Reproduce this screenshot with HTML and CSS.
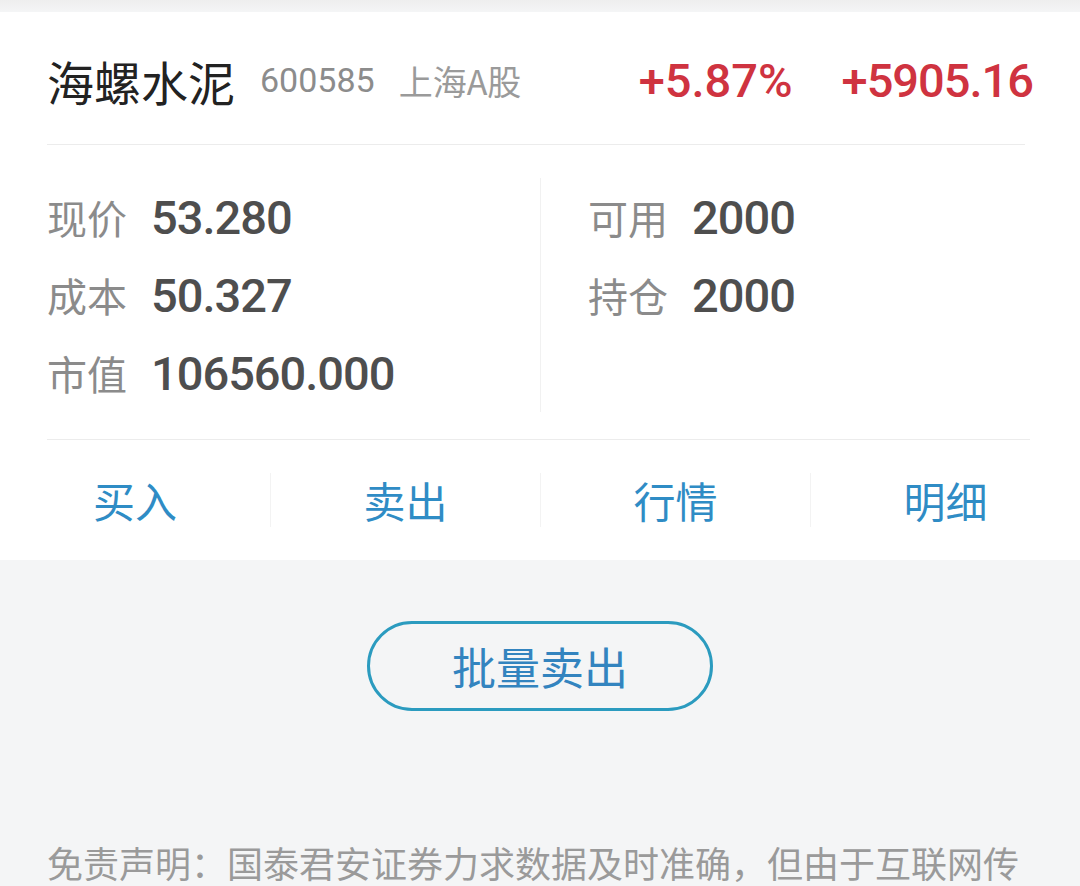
FILE: index.html
```html
<!DOCTYPE html>
<html lang="zh-CN">
<head>
<meta charset="utf-8">
<title>持仓详情</title>
<link rel="stylesheet" href="styles.css">
</head>
<body>
<div class="page">
  <div class="card">
    <div class="head">
      <span class="name">海螺水泥</span>
      <span class="code">600585</span>
      <span class="market">上海A股</span>
      <span class="spacer"></span>
      <span class="up pct">+5.87%</span>
      <span class="up amt">+5905.16</span>
    </div>
    <div class="divider"></div>
    <div class="stats">
      <div class="col col-left">
        <div class="row"><span class="label">现价</span><span class="value">53.280</span></div>
        <div class="row"><span class="label">成本</span><span class="value">50.327</span></div>
        <div class="row"><span class="label">市值</span><span class="value">106560.000</span></div>
      </div>
      <div class="col col-right">
        <div class="row"><span class="label">可用</span><span class="value">2000</span></div>
        <div class="row"><span class="label">持仓</span><span class="value">2000</span></div>
      </div>
    </div>
    <div class="divider divider-wide"></div>
    <div class="actions">
      <div class="action">买入</div>
      <div class="action sep">卖出</div>
      <div class="action sep">行情</div>
      <div class="action sep">明细</div>
    </div>
  </div>
  <div class="batch-wrap">
    <div class="batch">批量卖出</div>
  </div>
  <p class="disclaimer">免责声明：国泰君安证券力求数据及时准确，但由于互联网传输等原因，数据可能存在延迟或误差，仅供参考，不构成投资建议。</p>
</div>
</body>
</html>
```

FILE: styles.css
```css
html, body {
  margin: 0;
  padding: 0;
  overflow: hidden;
}
body {
  background: #f4f5f6;
  font-family: "Noto Sans CJK SC", "Noto Sans", sans-serif;
}
.page {
  height: 886px;
  overflow: hidden;
  padding-top: 12px;
  box-sizing: border-box;
  background: linear-gradient(#eeeeee, #f4f5f6 12px);
}
.card {
  background: #ffffff;
}
.head {
  height: 132px;
  padding: 4px 47px 0;
  box-sizing: border-box;
  display: flex;
  align-items: center;
}
.name {
  font-size: 47px;
  color: #222222;
  margin-right: 25px;
}
.code {
  font-family: Roboto, "Noto Sans", sans-serif;
  font-size: 34px;
  color: #8c8c8c;
  margin-right: 24px;
}
.market {
  font-size: 34px;
  color: #9a9a9a;
}
.spacer {
  flex: 1;
}
.up {
  font-family: Roboto, "Noto Sans", sans-serif;
  font-weight: 500;
  font-size: 47px;
  color: #cf3340;
}
.pct {
  margin-right: 49px;
}
.amt {
  letter-spacing: -1px;
}
.divider {
  height: 1px;
  background: #ececec;
  margin: 0 55px 0 47px;
}
.divider-wide {
  margin: 0 50px 0 47px;
}
.stats {
  display: flex;
  padding: 33px 0 27px;
}
.col-left {
  width: 540px;
  padding-left: 47px;
  box-sizing: border-box;
}
.col-right {
  flex: 1;
  padding-left: 47px;
  border-left: 1px solid #f1f1f1;
}
.row {
  height: 78px;
  display: flex;
  align-items: center;
}
.label {
  font-size: 40px;
  color: #8b8b8b;
  margin-right: 24px;
}
.value {
  font-family: Roboto, "Noto Sans", sans-serif;
  font-weight: 500;
  font-size: 47px;
  letter-spacing: -1px;
  color: #4e4e4e;
}
.actions {
  display: grid;
  grid-template-columns: repeat(4, 1fr);
  height: 120px;
  align-items: center;
}
.action {
  height: 54px;
  line-height: 54px;
  text-align: center;
  font-size: 42px;
  color: #2f8cc5;
}
.action.sep {
  border-left: 1px solid #f3f3f3;
}
.batch-wrap {
  padding-top: 61px;
  display: flex;
  justify-content: center;
}
.batch {
  width: 346px;
  height: 90px;
  box-sizing: border-box;
  border: 3px solid #2b9bbf;
  border-radius: 45px;
  display: flex;
  align-items: center;
  justify-content: center;
  font-size: 44px;
  color: #3384bf;
}
.disclaimer {
  margin: 127px 0 0;
  padding: 0 47px;
  font-size: 36px;
  line-height: 48px;
  color: #9a9a9a;
}
```
